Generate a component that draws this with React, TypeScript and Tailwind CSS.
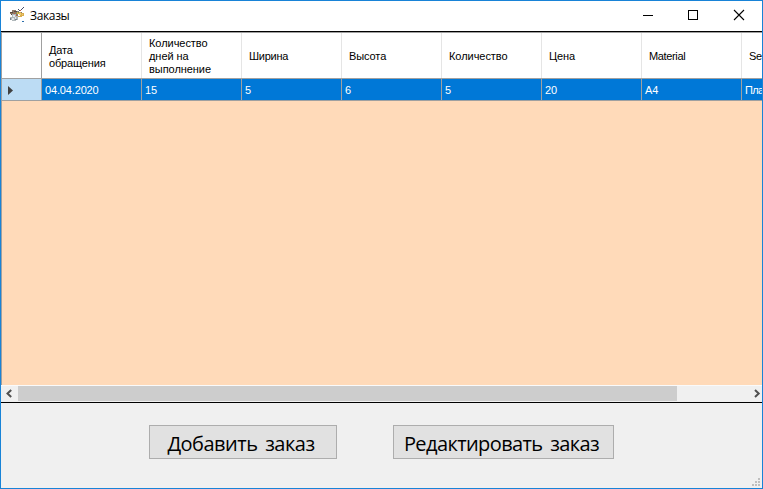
import React from 'react';

const headers = [
  { lines: ['Дата', 'обращения'], value: '04.04.2020', spacing: 'tracking-[-0.15px]' },
  { lines: ['Количество', 'дней на', 'выполнение'], value: '15', spacing: 'tracking-[-0.05px]' },
  { lines: ['Ширина'], value: '5', spacing: 'tracking-[-0.25px]' },
  { lines: ['Высота'], value: '6', spacing: 'tracking-[-0.1px]' },
  { lines: ['Количество'], value: '5', spacing: 'tracking-[-0.05px]' },
  { lines: ['Цена'], value: '20', spacing: 'tracking-[-0.1px]' },
  { lines: ['Material'], value: 'A4', spacing: 'tracking-[-0.35px]' },
  { lines: ['Se'], value: 'Пла', spacing: 'tracking-[-0.3px]' },
];

function AppIcon() {
  return (
    <svg width="16" height="16" viewBox="0 0 16 16" shapeRendering="crispEdges">
      <path d="M3 3h4v1h3v1h3v2H9v2H4V7H1V5h2z" fill="#8b7866" />
      <path d="M1 5h3v1H1zM5 4h3v1H5zM2 7h2v1H2z" fill="#57483d" />
      <path d="M8 5h4v1h3v3h-2v1H9V9h2V7H8z" fill="#d9ad4d" />
      <path d="M10 6h2v2h-2zM13 7h1v1h-1z" fill="#efcc72" />
      <path d="M3 7h4v2h2v4H7v1H3v-1H1v-3h2z" fill="#afb7ba" />
      <path d="M4 8h2v2H4zM3 11h2v2H3zM6 10h1v2H6z" fill="#e2e7e9" />
      <path d="M1 11h1v2H1zM6 12h2v1H6zM8 4h1v1H8z" fill="#77828a" />
      <path d="M9 2h1v1H9zM10 3h1v1h-1zM12 2h1v1h-1zM13 1h1v1h-1zM14 0h1v1h-1z" fill="#454d68" />
      <path d="M11 3h1v1h-1zM7 8h1v1H7zM5 6h1v1H5z" fill="#c15b45" />
      <path d="M7 6h1v1H7zM9 5h1v1H9z" fill="#779a42" />
      <path d="M13 14h2v1h-2z" fill="#2c70ac" />
    </svg>
  );
}

function TitleBar() {
  return (
    <header className="flex h-[30px] shrink-0 bg-white">
      <div className="flex w-[29px] shrink-0 pl-[8px] pt-[6px]"><AppIcon /></div>
      <h1 className="pt-[7px] font-['Open_Sans',sans-serif] text-[12px] leading-[16px] tracking-[-0.35px] text-black">Заказы</h1>
      <svg className="ml-auto" width="138" height="30" viewBox="0 0 138 30" fill="none" stroke="#000">
        <path d="M19 14.5h10M64.5 9.5h9v9h-9z" shapeRendering="crispEdges" />
        <path d="m110 9 10 10m0-10-10 10" strokeWidth="1.1" />
      </svg>
    </header>
  );
}

function OrdersTable() {
  return (
    <main className="flex h-[353px] shrink-0 flex-col overflow-hidden border-l border-t border-[#a0a0a0] bg-[#ffdab9] font-['Liberation_Sans',sans-serif] text-[11px]">
      <div className="flex h-[46px] shrink-0 border-b border-[#a0a0a0] bg-white text-black">
        <div className="w-[40px] shrink-0 border-r border-[#a0a0a0]" />
        {headers.map((h, i) => (
          <div key={i} className="flex w-[100px] shrink-0 flex-col justify-center border-r border-[#e5e5e5] pl-[7px] pt-[2px] leading-[13px] last:w-[20px] last:border-r-0">
            {h.lines.map((line) => <span key={line} className={h.spacing}>{line}</span>)}
          </div>
        ))}
      </div>
      <div className="flex h-[22px] shrink-0 border-b border-[#a0a0a0] bg-[#0078d7] text-white">
        <div className="flex w-[40px] shrink-0 items-center border-r border-[#a0a0a0] bg-[#bcdcf4] pl-[6px] pt-[2px]">
          <svg width="5" height="9" viewBox="0 0 5 9"><path d="M0 0l5 4.5L0 9z" fill="#404040" /></svg>
        </div>
        {headers.map((h, i) => (
          <div key={i} className="flex w-[100px] shrink-0 items-center border-r border-[#a0a0a0] pl-[3px] pt-[2px] tracking-[-0.15px] last:w-[20px] last:border-r-0 last:tracking-[-0.6px]">{h.value}</div>
        ))}
      </div>
    </main>
  );
}

function ScrollBar() {
  return (
    <div className="flex h-[17px] shrink-0 border-t border-[#fafafa] bg-[#f0f0f0]">
      <svg className="shrink-0" width="17" height="16" viewBox="0 0 17 16"><path d="m10.2 4-3.7 3.5 3.7 3.5" fill="none" stroke="#505050" strokeWidth="2" /></svg>
      <div className="h-[15px] w-[659px] shrink-0 bg-[#cdcdcd]" />
      <svg className="ml-auto shrink-0" width="17" height="16" viewBox="0 0 17 16"><path d="m10 4 3.7 3.5L10 11" fill="none" stroke="#505050" strokeWidth="2" /></svg>
    </div>
  );
}

export default function App() {
  return (
    <div className="flex h-[489px] w-[763px] flex-col overflow-hidden border border-[#1883d7] bg-[#f0f0f0]">
      <TitleBar />
      <section className="flex h-[372px] shrink-0 flex-col border-y border-black">
        <OrdersTable />
        <ScrollBar />
      </section>
      <footer className="flex flex-1 items-start pl-[148px] pt-[22px] text-black">
        <button className="flex h-[34px] w-[188px] items-center justify-center border border-[#adadad] bg-[#e1e1e1] pr-[4px] pt-[3px] font-['Open_Sans',sans-serif] text-[20px] font-medium leading-[30px] tracking-[-0.5px] [word-spacing:3px]"><span className="whitespace-nowrap">Добавить заказ</span></button>
        <button className="ml-[56px] flex h-[34px] w-[221px] items-center justify-center border border-[#adadad] bg-[#e1e1e1] pr-[4px] pt-[3px] font-['Open_Sans',sans-serif] text-[20px] font-medium leading-[30px] tracking-[-0.6px] [word-spacing:3px]"><span className="whitespace-nowrap">Редактировать заказ</span></button>
        <svg className="ml-auto mr-[2px] mt-[53px]" width="8" height="8" viewBox="0 0 8 8" fill="#bfbfbf" shapeRendering="crispEdges">
          <path d="M6 0h2v2H6zM3 3h2v2H3zM6 3h2v2H6zM0 6h2v2H0zM3 6h2v2H3zM6 6h2v2H6z" />
        </svg>
      </footer>
    </div>
  );
}
